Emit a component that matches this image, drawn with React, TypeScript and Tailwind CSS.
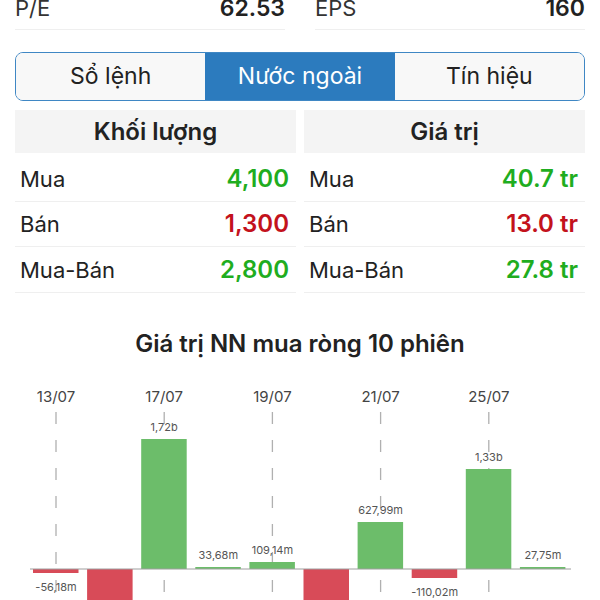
import React from "react";

const stats = [
  { label: "P/E", value: "62.53" },
  { label: "EPS", value: "160" },
];

const tabs = ["Sổ lệnh", "Nước ngoài", "Tín hiệu"];

const tables = [
  {
    title: "Khối lượng",
    rows: [
      { label: "Mua", value: "4,100", up: true },
      { label: "Bán", value: "1,300", up: false },
      { label: "Mua-Bán", value: "2,800", up: true },
    ],
  },
  {
    title: "Giá trị",
    rows: [
      { label: "Mua", value: "40.7 tr", up: true },
      { label: "Bán", value: "13.0 tr", up: false },
      { label: "Mua-Bán", value: "27.8 tr", up: true },
    ],
  },
];

const rowHeights = ["h-[49px]", "h-[45px]", "h-[46px]"];

// bar heights in px against the zero line (y = 199)
const bars = [
  { h: -4, label: "-56,18m", date: "13/07" },
  { h: -60, label: "" },
  { h: 130, label: "1,72b", date: "17/07" },
  { h: 2, label: "33,68m" },
  { h: 7, label: "109,14m", date: "19/07" },
  { h: -60, label: "" },
  { h: 47, label: "627,99m", date: "21/07" },
  { h: -9, label: "-110,02m" },
  { h: 100, label: "1,33b", date: "25/07" },
  { h: 2, label: "27,75m" },
];

const ZERO = 199;

const NetChart = () => {
  return (
    <svg width={600} height={230} className="block">
      {bars.map((b, i) => {
        const cx = 56 + i * 54.1;
        return b.date ? (
          <g key={"d" + i}>
            <text
              x={cx}
              y={32}
              textAnchor="middle"
              fontSize={15}
              fill="#444"
              fontFamily="Inter, sans-serif"
            >
              {b.date}
            </text>
            <line
              x1={cx}
              y1={42}
              x2={cx}
              y2={240}
              stroke="#b0b0b0"
              strokeWidth={1.3}
              strokeDasharray="12 16"
            />
          </g>
        ) : null;
      })}
      {bars.map((b, i) => {
        const x = 33 + i * 54.1;
        const cx = x + 23;
        const up = b.h > 0;
        const y = up ? ZERO - b.h : ZERO;
        return (
          <g key={"b" + i}>
            <rect
              x={x}
              y={y}
              width={45.5}
              height={Math.abs(b.h)}
              fill={up ? "#6cbd6a" : "#d84b58"}
            />
            {b.label && (
              <text
                x={cx}
                y={up ? y - 8 : ZERO + Math.abs(b.h) + 18}
                textAnchor="middle"
                fontSize={11}
                fill="#555"
                fontFamily="Inter, sans-serif"
              >
                {b.label}
              </text>
            )}
          </g>
        );
      })}
      <line x1={30} y1={ZERO} x2={571} y2={ZERO} stroke="#9e9e9e" strokeWidth={1} />
    </svg>
  );
};

const App = () => {
  return (
    <div className="w-[600px] h-[600px] overflow-hidden bg-white font-['Inter',sans-serif] text-[#222]">
      {/* P/E, EPS row */}
      <div className="grid grid-cols-2 gap-x-[30px] px-[15px] -mt-[6px]">
        {stats.map((s) => (
          <div
            key={s.label}
            className="flex justify-between items-start h-[36px] border-b border-[#efefef] text-[22px] leading-[28px]"
          >
            <span className="text-[#333]">{s.label}</span>
            <span className="font-semibold text-[23px]">{s.value}</span>
          </div>
        ))}
      </div>

      {/* Tabs */}
      <div className="mx-[15px] mt-[22px] h-[49px] flex rounded-[8px] border-[1.5px] border-[#3f87c4] overflow-hidden">
        {tabs.map((t, i) => (
          <div
            key={t}
            className={`flex-1 flex items-center justify-center text-[23px] ${
              i === 1 ? "bg-[#2c7bbe] text-white" : "bg-[#f8f8f8] text-[#222]"
            }`}
          >
            {t}
          </div>
        ))}
      </div>

      {/* Foreign trading tables */}
      <div className="grid grid-cols-2 gap-x-[8px] px-[15px] mt-[9px]">
        {tables.map((tb) => (
          <div key={tb.title}>
            <div className="h-[43px] bg-[#f4f4f4] flex items-center justify-center text-[24px] font-semibold">
              {tb.title}
            </div>
            {tb.rows.map((r, i) => (
              <div
                key={r.label}
                className={`${rowHeights[i]} flex items-end pb-[8px] justify-between pl-[5px] pr-[7px] border-b border-[#efefef] text-[22px] leading-[28px]`}
              >
                <span className="text-[#222]">{r.label}</span>
                <span className={`font-semibold text-[24px] ${r.up ? "text-[#1fad1f]" : "text-[#c3121c]"}`}>
                  {r.value}
                </span>
              </div>
            ))}
          </div>
        ))}
      </div>

      {/* Chart */}
      <div className="mt-[36px] text-center text-[24px] leading-[30px] font-semibold text-[#222]">
        Giá trị NN mua ròng 10 phiên
      </div>
      <div className="mt-[11px]">
        <NetChart />
      </div>
    </div>
  );
};

export default App;
